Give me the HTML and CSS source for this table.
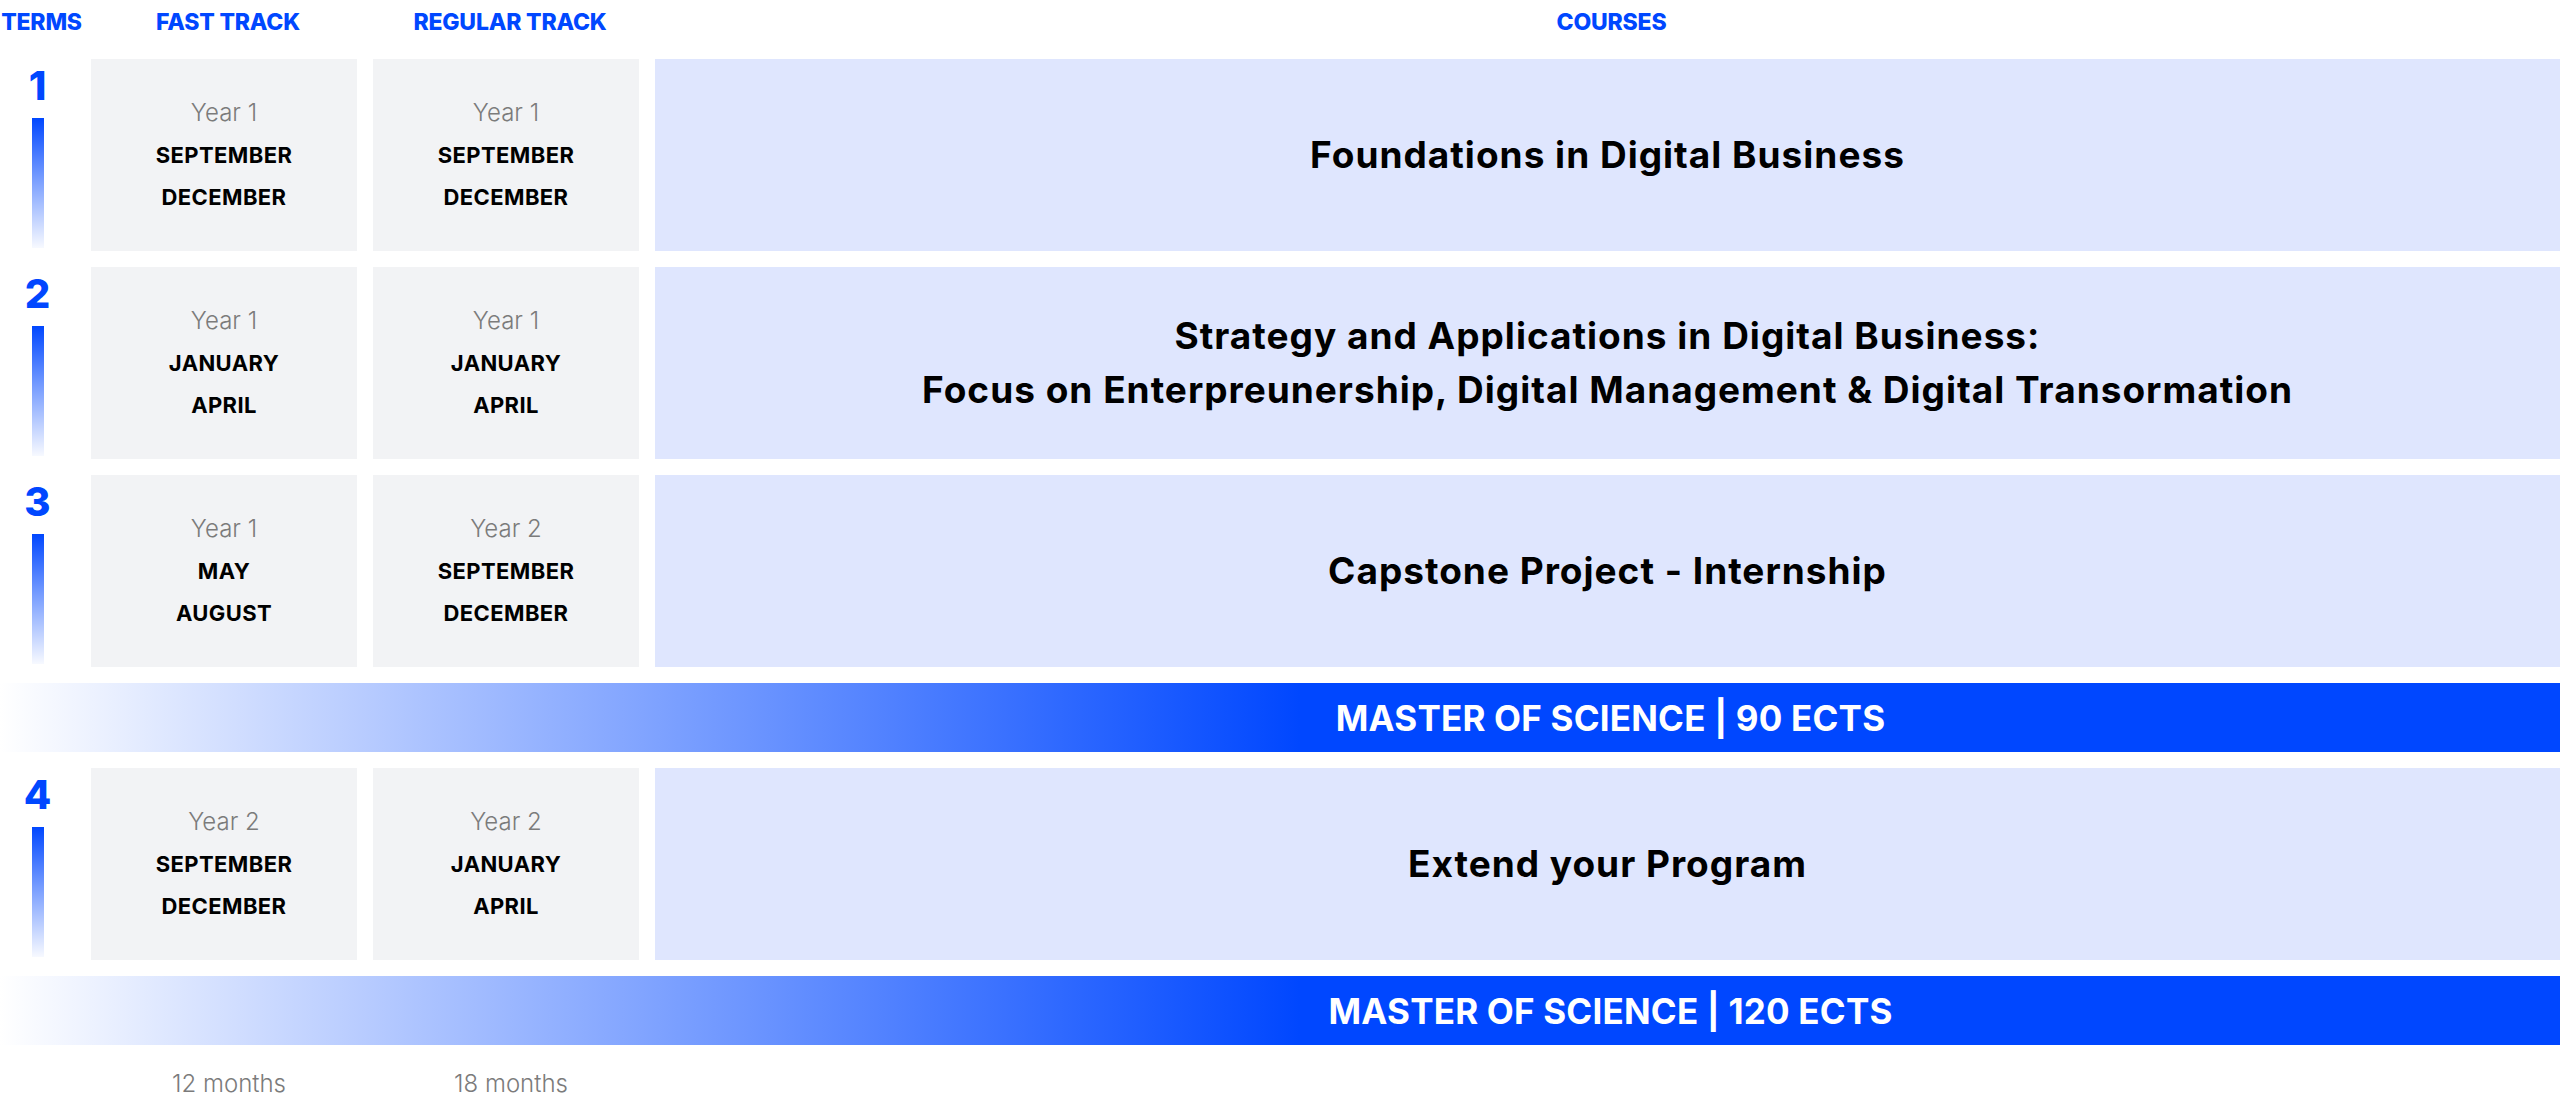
FILE: index.html
```html
<!DOCTYPE html>
<html lang="en">
<head>
<meta charset="utf-8">
<title>Program Structure</title>
<link rel="stylesheet" href="styles.css">
</head>
<body>
<div class="schedule">
  <div class="head">TERMS</div>
  <div class="head">FAST TRACK</div>
  <div class="head">REGULAR TRACK</div>
  <div class="head">COURSES</div>

  <div class="term"><span class="num">1</span><span class="bar"></span></div>
  <div class="track"><span class="year">Year 1</span><span class="month">SEPTEMBER</span><span class="month">DECEMBER</span></div>
  <div class="track"><span class="year">Year 1</span><span class="month">SEPTEMBER</span><span class="month">DECEMBER</span></div>
  <div class="course">Foundations in Digital Business</div>

  <div class="term"><span class="num">2</span><span class="bar"></span></div>
  <div class="track"><span class="year">Year 1</span><span class="month">JANUARY</span><span class="month">APRIL</span></div>
  <div class="track"><span class="year">Year 1</span><span class="month">JANUARY</span><span class="month">APRIL</span></div>
  <div class="course">Strategy and Applications in Digital Business:<br>Focus on Enterpreunership, Digital Management &amp; Digital Transormation</div>

  <div class="term"><span class="num">3</span><span class="bar"></span></div>
  <div class="track"><span class="year">Year 1</span><span class="month">MAY</span><span class="month">AUGUST</span></div>
  <div class="track"><span class="year">Year 2</span><span class="month">SEPTEMBER</span><span class="month">DECEMBER</span></div>
  <div class="course">Capstone Project - Internship</div>

  <div class="banner"><span class="banner-text">MASTER OF SCIENCE | 90 ECTS</span></div>

  <div class="term"><span class="num">4</span><span class="bar"></span></div>
  <div class="track"><span class="year">Year 2</span><span class="month">SEPTEMBER</span><span class="month">DECEMBER</span></div>
  <div class="track"><span class="year">Year 2</span><span class="month">JANUARY</span><span class="month">APRIL</span></div>
  <div class="course">Extend your Program</div>

  <div class="banner"><span class="banner-text">MASTER OF SCIENCE | 120 ECTS</span></div>

  <div class="foot"></div>
  <div class="foot">12 months</div>
  <div class="foot">18 months</div>
  <div class="foot"></div>
</div>
</body>
</html>
```

FILE: styles.css
```css
html, body {
  margin: 0;
  padding: 0;
  background: #ffffff;
  overflow: hidden;
}

body {
  font-family: "Inter", "Open Sans", sans-serif;
  color: #000;
}

.schedule {
  display: grid;
  grid-template-columns: 75px 266px 266px 1fr;
  grid-template-rows: 43px 192px 192px 192px 69px 192px 69px 44px;
  column-gap: 16px;
  row-gap: 16px;
  width: 2560px;
}

.head {
  display: flex;
  align-items: center;
  justify-content: center;
  padding-left: 8px;
  color: #0047ff;
  font-weight: 800;
  font-size: 23px;
  letter-spacing: -0.2px;
}

.term {
  display: flex;
  flex-direction: column;
  align-items: center;
  padding-top: 7px;
}

.num {
  color: #0047ff;
  font-weight: 800;
  font-size: 40px;
  line-height: 40px;
}

.bar {
  display: block;
  width: 12px;
  flex: 1;
  margin-top: 12px;
  margin-bottom: 3px;
  background: linear-gradient(180deg, #0047ff 0%, rgba(0, 71, 255, 0.55) 45%, rgba(0, 71, 255, 0.03) 100%);
}

.track {
  background: #f2f3f5;
  display: flex;
  flex-direction: column;
  align-items: center;
  justify-content: center;
}

.year {
  color: #7b7b7b;
  font-weight: 300;
  font-size: 24px;
  line-height: 42px;
}

.month {
  font-weight: 700;
  font-size: 22px;
  line-height: 42px;
  letter-spacing: 0.4px;
}

.course {
  background: #dfe6fe;
  display: flex;
  align-items: center;
  justify-content: center;
  text-align: center;
  font-weight: 700;
  font-size: 37px;
  line-height: 54px;
  letter-spacing: 1px;
}

.banner {
  grid-column: 1 / -1;
  display: grid;
  grid-template-columns: subgrid;
  align-items: center;
  background: linear-gradient(90deg, #ffffff 0px, #0047ff 1300px, #0047ff 100%);
}

.banner-text {
  grid-column: 4;
  text-align: center;
  padding-left: 6px;
  color: #ffffff;
  font-weight: 700;
  font-size: 35px;
  letter-spacing: 0.2px;
}

.foot {
  display: flex;
  align-items: center;
  justify-content: center;
  padding-left: 10px;
  color: #7b7b7b;
  font-weight: 300;
  font-size: 24px;
}
```
